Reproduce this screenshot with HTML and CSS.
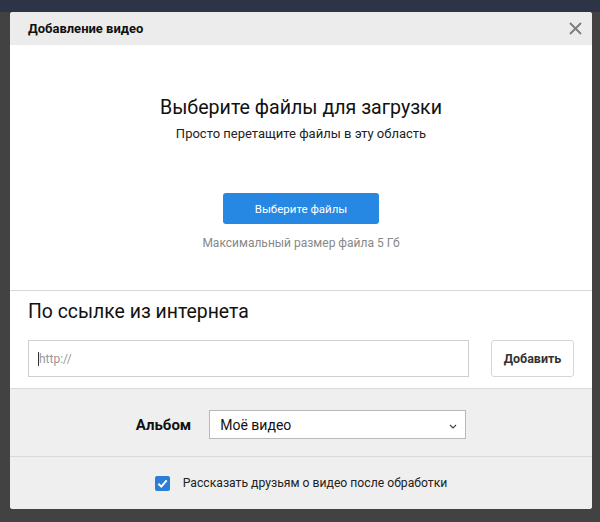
FILE: index.html
```html
<!DOCTYPE html>
<html lang="ru">
<head>
<meta charset="utf-8">
<title>Добавление видео</title>
<link rel="stylesheet" href="styles.css">
</head>
<body>
<div class="backdrop">
  <div class="modal">
    <div class="modal-header">
      <span class="modal-title">Добавление видео</span>
      <svg class="close" width="13" height="13" viewBox="0 0 13 13"><path d="M1 1L12 12M12 1L1 12" stroke="#7a7a7a" stroke-width="1.8" fill="none"/></svg>
    </div>
    <div class="upload">
      <div class="upload-title">Выберите файлы для загрузки</div>
      <div class="upload-sub">Просто перетащите файлы в эту область</div>
      <button class="btn-primary">Выберите файлы</button>
      <div class="upload-note">Максимальный размер файла 5 Гб</div>
    </div>
    <div class="link">
      <div class="link-title">По ссылке из интернета</div>
      <div class="link-row">
        <div class="input"><span class="caret"></span><span class="placeholder">http://</span></div>
        <button class="btn-secondary">Добавить</button>
      </div>
    </div>
    <div class="album">
      <span class="album-label">Альбом</span>
      <div class="select">
        <span>Моё видео</span>
        <svg width="8" height="5" viewBox="0 0 8 5"><path d="M1 1L4 4L7 1" stroke="#444" stroke-width="1.2" fill="none"/></svg>
      </div>
    </div>
    <div class="share">
      <span class="checkbox"><svg width="15" height="15" viewBox="0 0 14 14"><path d="M3.2 7.2L5.9 9.9L10.9 4.1" stroke="#fff" stroke-width="1.9" fill="none"/></svg></span>
      <span class="share-text">Рассказать друзьям о видео после обработки</span>
    </div>
  </div>
</div>
</body>
</html>
```

FILE: styles.css
```css
* { box-sizing: border-box; }
html, body { margin: 0; padding: 0; }
body {
  width: 600px;
  height: 522px;
  overflow: hidden;
  font-family: Roboto, "Liberation Sans", Arial, sans-serif;
  color: #222;
  background: linear-gradient(#2d3446 0, #2d3446 12px, #424242 12px);
}
.backdrop {
  padding: 12px 8px 0 10px;
}
.modal {
  width: 582px;
  background: #fff;
  border-radius: 3px;
  overflow: hidden;
}
.modal-header {
  height: 33px;
  background: #ececec;
  display: flex;
  align-items: center;
  justify-content: space-between;
  padding: 0 10px 0 18px;
}
.modal-title {
  font-size: 13px;
  font-weight: 700;
  color: #111;
}
.close { display: block; }
.upload {
  height: 246px;
  border-bottom: 1px solid #d9d9d9;
  display: flex;
  flex-direction: column;
  align-items: center;
  padding-top: 51px;
}
.upload-title {
  font-size: 19.6px;
  line-height: 24px;
  color: #111;
}
.upload-sub {
  font-size: 13px;
  line-height: 18px;
  margin-top: 5px;
  color: #222;
}
.btn-primary {
  margin-top: 50px;
  width: 156px;
  height: 31px;
  border: 0;
  border-radius: 3px;
  background: #2688e3;
  color: #fff;
  font-family: inherit;
  font-size: 11.5px;
}
.upload-note {
  margin-top: 11px;
  font-size: 12px;
  line-height: 16px;
  color: #888;
}
.link {
  height: 98px;
  border-bottom: 1px solid #d9d9d9;
  padding: 9px 18px 0 18px;
}
.link-title {
  font-size: 19.4px;
  line-height: 24px;
  color: #111;
}
.link-row {
  display: flex;
  margin-top: 16px;
  gap: 22px;
}
.input {
  width: 441px;
  height: 37px;
  border: 1px solid #cfcfcf;
  display: flex;
  align-items: center;
  padding-left: 9px;
}
.caret {
  width: 1px;
  height: 14px;
  background: #333;
}
.placeholder {
  font-size: 12px;
  color: #999;
}
.btn-secondary {
  width: 83px;
  height: 37px;
  border: 1px solid #d6d6d6;
  border-radius: 3px;
  background: #fff;
  font-family: inherit;
  font-size: 12.5px;
  font-weight: 700;
  color: #333;
}
.album {
  height: 68px;
  background: #efefef;
  border-bottom: 1px solid #dadada;
  display: flex;
  align-items: center;
  justify-content: center;
  gap: 18px;
  padding-top: 4px;
}
.album-label {
  font-size: 15px;
  font-weight: 700;
  color: #111;
}
.select {
  width: 257px;
  height: 29px;
  background: #fff;
  border: 1px solid #b9b9b9;
  display: flex;
  align-items: center;
  justify-content: space-between;
  padding: 0 8px 0 10px;
  font-size: 14px;
  color: #111;
}
.select svg { display: block; margin-top: 3px; }
.share {
  height: 52px;
  background: #efefef;
  display: flex;
  align-items: center;
  justify-content: center;
  gap: 13px;
}
.checkbox {
  width: 15px;
  height: 15px;
  border-radius: 2px;
  background: #2a7ed8;
  display: block;
}
.checkbox svg { display: block; }
.share-text {
  font-size: 12.2px;
  color: #222;
}
```
